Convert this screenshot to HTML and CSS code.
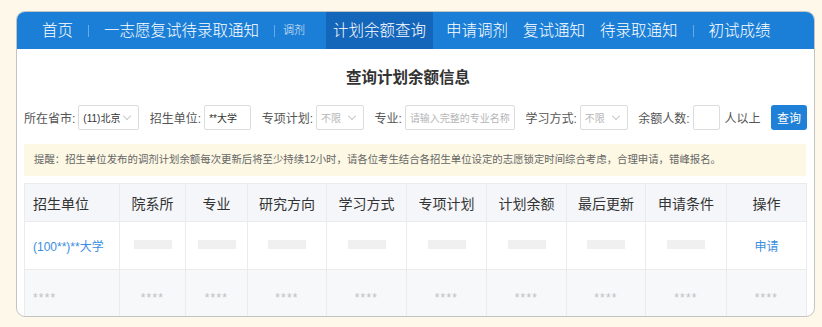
FILE: index.html
```html
<!DOCTYPE html>
<html>
<head>
<meta charset="utf-8">
<meta name="viewport" content="width=device-width, initial-scale=1">
<link rel="stylesheet" href="styles.css">
</head>
<body>

<div class="card">
  <div class="nav">
    <a class="nav-item">首页</a>
    <span class="nav-sep"></span>
    <a class="nav-item">一志愿复试待录取通知</a>
    <span class="nav-sep"></span>
    <a class="nav-item nav-sub">调剂</a>
    <a class="nav-item active">计划余额查询</a>
    <a class="nav-item">申请调剂</a>
    <a class="nav-item">复试通知</a>
    <a class="nav-item">待录取通知</a>
    <span class="nav-sep"></span>
    <a class="nav-item">初试成绩</a>
  </div>

  <div class="content">
    <h2 class="title">查询计划余额信息</h2>

    <form class="filters" onsubmit="event.preventDefault()">
      <label class="field">所在省市:
        <span class="select w61">(11)北京<i class="arrow"></i></span>
      </label>
      <label class="field">招生单位:
        <span class="input w47">**大学</span>
      </label>
      <label class="field">专项计划:
        <span class="select w48 muted">不限<i class="arrow"></i></span>
      </label>
      <label class="field">专业:
        <span class="input w110 muted">请输入完整的专业名称</span>
      </label>
      <label class="field">学习方式:
        <span class="select w48 muted">不限<i class="arrow"></i></span>
      </label>
      <label class="field">余额人数:
        <span class="input w27"></span>
        <span class="unit">人以上</span>
      </label>
      <button type="submit" class="btn">查询</button>
    </form>

    <div class="notice">提醒：招生单位发布的调剂计划余额每次更新后将至少持续12小时，请各位考生结合各招生单位设定的志愿锁定时间综合考虑，合理申请，错峰报名。</div>

    <table class="grid">
      <colgroup>
        <col style="width:95px"><col style="width:66px"><col style="width:62px"><col style="width:79px"><col style="width:80px">
        <col style="width:80px"><col style="width:80px"><col style="width:79px"><col style="width:81px"><col style="width:80px">
      </colgroup>
      <thead>
        <tr>
          <th class="left">招生单位</th><th>院系所</th><th>专业</th><th>研究方向</th><th>学习方式</th>
          <th>专项计划</th><th>计划余额</th><th>最后更新</th><th>申请条件</th><th>操作</th>
        </tr>
      </thead>
      <tbody>
        <tr>
          <td class="left"><a class="link">(100**)**大学</a></td>
          <td><span class="bar"></span></td><td><span class="bar"></span></td><td><span class="bar"></span></td>
          <td><span class="bar"></span></td><td><span class="bar"></span></td><td><span class="bar"></span></td>
          <td><span class="bar"></span></td><td><span class="bar"></span></td>
          <td><a class="link">申请</a></td>
        </tr>
        <tr class="masked">
          <td class="left">****</td><td>****</td><td>****</td><td>****</td><td>****</td>
          <td>****</td><td>****</td><td>****</td><td>****</td><td>****</td>
        </tr>
      </tbody>
    </table>
  </div>
</div>

</body>
</html>
```

FILE: styles.css
```css
* {box-sizing: border-box;}

body {
  margin: 0;
  background: #fdf8ea;
  font-family: "Liberation Sans", "Noto Sans CJK SC", sans-serif;
  color: #333;
}

/* white card with the blue menu on top */
.card {
  width: 799px;
  height: 306px;
  margin: 11px 0 0 16px;
  background: #fff;
  border: 1px solid #c4c4c4;
  border-radius: 9px;
  overflow: hidden;
}

.nav {
  display: flex;
  align-items: stretch;
  height: 37px;
  padding-left: 17px;
  background: #1c7fd7;
}

.nav-item {
  display: flex;
  align-items: center;
  padding: 0 7px;
  color: #fff;
  font-size: 15.5px;
  font-weight: 300;
  line-height: 1;
  margin-left: 1px;
}

.nav-sep + .nav-item {margin-left: 0;}

.nav-sub {
  font-size: 11px;
  padding: 0 20px 0 0;
  opacity: 0.85;
}

.nav-item.active {
  background: #1466bb;
  padding: 0 7px;
}

.active + .nav-item {margin-left: 6px;}

.nav-sep {
  width: 1px;
  height: 12px;
  align-self: center;
  margin: 0 8px;
  background: rgba(255,255,255,0.35);
}

.content {
  padding: 0 8px 0 7px;
}

.title {
  margin: 18px 0 0 0;
  padding-right: 14px;
  height: 22px;
  line-height: 22px;
  text-align: center;
  font-size: 15.5px;
  font-weight: bold;
  color: #333;
}

/* search row */
.filters {
  display: flex;
  align-items: center;
  gap: 10.5px;
  margin-top: 16px;
  height: 25px;
}

.field {
  display: flex;
  flex-shrink: 0;
  align-items: center;
  gap: 3px;
  font-size: 12px;
  color: #555;
  white-space: nowrap;
}

.select, .input {
  position: relative;
  display: flex;
  flex-shrink: 0;
  align-items: center;
  height: 25px;
  padding: 0 4px;
  border: 1px solid #dcdcdc;
  border-radius: 2px;
  font-size: 10px;
  color: #333;
  background: #fff;
  overflow: hidden;
}

.muted {color: #b5b5b5;}

.arrow {
  position: absolute;
  right: 8px;
  top: 7px;
  width: 6px;
  height: 6px;
  border-right: 1px solid #c8c8c8;
  border-bottom: 1px solid #c8c8c8;
  transform: rotate(45deg);
}

.w61 {width: 61px;}
.w47 {width: 47px;}
.w48 {width: 48px;}
.w110 {width: 110px;}
.w27 {width: 27px;}

.unit {margin-left: 2px;}

.btn {
  flex-shrink: 0;
  width: 36px;
  height: 25px;
  margin-left: auto;
  padding: 0;
  border: none;
  border-radius: 3px;
  background: #1f80d8;
  color: #fff;
  font-family: inherit;
  font-size: 12px;
}

.notice {
  margin-top: 14px;
  height: 32px;
  line-height: 32px;
  padding-left: 10px;
  background: #fcf8e4;
  font-size: 10.4px;
  color: #666;
  white-space: nowrap;
}

/* result table */
.grid {
  margin-top: 7px;
  width: 782px;
  table-layout: fixed;
  border-collapse: collapse;
  font-size: 14px;
}

.grid th, .grid td {
  border: 1px solid #ebebeb;
  text-align: center;
  padding: 0;
}

.grid th {
  height: 38px;
  background: #f4f6f9;
  font-weight: normal;
  color: #333;
}

.grid td {
  height: 48px;
}

.grid .left {
  text-align: left;
  padding-left: 8px;
}

.link {
  color: #3b8ee0;
  font-size: 12px;
}

.bar {
  display: inline-block;
  width: 38px;
  height: 9px;
  background: #f0f0f0;
  vertical-align: middle;
  transform: translateY(-2px);
}

.masked td {
  background: #f7f8fa;
  color: #c0c0c0;
  font-size: 12px;
  letter-spacing: 1.2px;
  padding-top: 8px;
}

.masked td.left {padding-left: 8px;}
```
